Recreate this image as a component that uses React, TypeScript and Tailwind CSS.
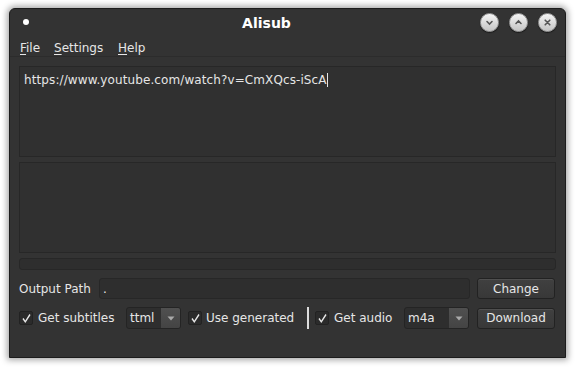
import React from "react";

const font = { fontFamily: '"DejaVu Sans", "Noto Sans", sans-serif' };

function TitleButton({ kind }: { kind: "min" | "max" | "close" }) {
  return (
    <div className="w-[19px] h-[19px] rounded-full bg-gradient-to-b from-[#f4f4f4] to-[#c4c4c4] border border-[#9a9a9a] flex items-center justify-center shadow-[0_1px_1px_rgba(0,0,0,0.5)]">
      <svg width="9" height="9" viewBox="0 0 9 9" fill="none" stroke="#555" strokeWidth="1.6" strokeLinecap="round">
        {kind === "min" && <path d="M2 3.5 L4.5 6 L7 3.5" />}
        {kind === "max" && <path d="M2 5.5 L4.5 3 L7 5.5" />}
        {kind === "close" && <path d="M2.2 2.2 L6.8 6.8 M6.8 2.2 L2.2 6.8" />}
      </svg>
    </div>
  );
}

function Check() {
  return (
    <div className="w-[14px] h-[14px] rounded-[2px] border border-[#222] bg-[#2b2b2b] flex items-center justify-center shrink-0">
      <svg width="11" height="11" viewBox="0 0 11 11" fill="none" stroke="#e8e8e8" strokeWidth="1.4">
        <path d="M2 5.5 L4.3 8.8 L9 1.5" />
      </svg>
    </div>
  );
}

function Combo({ value, width }: { value: string; width: string }) {
  return (
    <div className={`${width} h-[22px] flex rounded-[3px] border border-[#242424] bg-[#2e2e2e] shrink-0`}>
      <div className="flex-1 px-[3px] flex items-center text-[12px] text-[#e6e6e6]">{value}</div>
      <div className="w-[19px] rounded-r-[2px] bg-gradient-to-b from-[#505050] to-[#444] flex items-center justify-center">
        <svg width="8" height="5" viewBox="0 0 8 5">
          <path d="M0.5 0.5 H7.5 L4 4.5 Z" fill="#aaa" />
        </svg>
      </div>
    </div>
  );
}

function Button({ label }: { label: string }) {
  return (
    <div className="w-[78px] h-[21px] rounded-[3px] border border-[#222] bg-gradient-to-b from-[#404040] to-[#383838] shadow-[inset_0_1px_0_rgba(255,255,255,0.08)] flex items-center justify-center text-[12px] text-[#e6e6e6]">
      {label}
    </div>
  );
}

export default function App() {
  return (
    <div className="w-[575px] h-[368px] bg-white overflow-hidden pt-[8px] pl-[9px] whitespace-nowrap" style={font}>
      <div className="w-[557px] h-[350px] bg-[#333333] rounded-t-[6px] border border-[#1c1c1c] shadow-[0_0_6px_2px_rgba(0,0,0,0.35)] flex flex-col text-[#e6e6e6]">
        {/* title bar */}
        <div className="h-[28px] flex items-center px-[13px]">
          <div className="w-[6px] h-[6px] rounded-full bg-white mt-[-3px]" />
          <div className="flex-1 text-center font-bold text-[14px] text-white pl-[24px]">Alisub</div>
          <div className="flex gap-[10px] items-center mr-[-5px] mt-[-1px]">
            <TitleButton kind="min" />
            <TitleButton kind="max" />
            <TitleButton kind="close" />
          </div>
        </div>
        {/* menu */}
        <div className="h-[20px] flex items-center px-[10px] pt-[2px] text-[12px] border-b border-[#2c2c2c]">
          <span className="w-[34px]"><span className="underline underline-offset-2">F</span>ile</span>
          <span className="w-[64px]"><span className="underline underline-offset-2">S</span>ettings</span>
          <span><span className="underline underline-offset-2">H</span>elp</span>
        </div>
        <div className="flex flex-col px-[9px] pt-[9px]">
          <div className="h-[91px] border border-[#272727] bg-[#303030] px-[4px] pt-[4px] text-[12px] tracking-[0.1px]">
            <span>https://www.youtube.com/watch?v=CmXQcs-iScA</span>
            <span className="inline-block w-[1px] h-[14px] bg-[#e6e6e6] align-[-3px]" />
          </div>
          <div className="h-[91px] mt-[5px] border border-[#272727] bg-[#303030]" />
          <div className="h-[12px] mt-[5px] rounded-[3px] border border-[#272727] bg-[#2e2e2e]" />
          <div className="flex items-center mt-[8px] h-[21px]">
            <span className="text-[12px] w-[80px]">Output Path</span>
            <div className="w-[371px] h-[21px] rounded-[3px] border border-[#272727] bg-[#2e2e2e] px-[3px] text-[12px] flex items-center">.</div>
            <div className="ml-[7px]">
              <Button label="Change" />
            </div>
          </div>
          <div className="flex items-center mt-[7px] h-[24px] text-[12px]">
            <Check />
            <span className="ml-[5px] w-[88px]">Get subtitles</span>
            <Combo value="ttml" width="w-[55px]" />
            <div className="ml-[7px]"><Check /></div>
            <span className="ml-[4px] w-[101px]">Use generated</span>
            <div className="w-[2px] h-[22px] bg-[#dcdcdc]" />
            <div className="ml-[6px]"><Check /></div>
            <span className="ml-[5px] w-[70px]">Get audio</span>
            <Combo value="m4a" width="w-[65px]" />
            <div className="ml-[8px]">
              <Button label="Download" />
            </div>
          </div>
        </div>
      </div>
    </div>
  );
}
